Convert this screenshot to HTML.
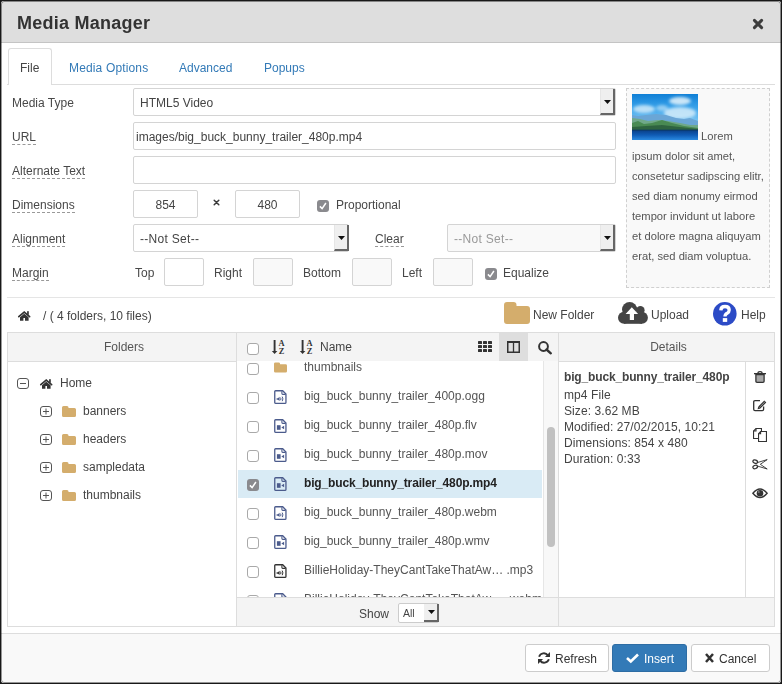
<!DOCTYPE html>
<html><head><meta charset="utf-8">
<style>
*{box-sizing:border-box;margin:0;padding:0}
html,body{width:782px;height:684px;overflow:hidden;background:#181818;font-family:"Liberation Sans",sans-serif;font-size:12px;color:#555;position:relative}
.a{position:absolute}
.t{position:absolute;white-space:nowrap;will-change:transform}
.lbl{border-bottom:1px dashed #999}
svg{position:absolute;display:block;overflow:visible}
</style></head><body>
<div class="a" style="left:1px;top:1px;width:780px;height:682px;background:#fff;border-radius:3px"></div>
<div class="a" style="left:1px;top:1px;width:780px;height:41px;background:#dedede;border-radius:3px 3px 0 0"></div>
<div class="a" style="left:1px;top:42px;width:780px;height:1px;background:#c4c4c4"></div>
<div class="t" style="left:17px;top:14px;font-size:18px;line-height:18px;color:#333;font-weight:bold;letter-spacing:0.25px">Media Manager</div>
<svg style="left:752px;top:18px;" width="12" height="12" viewBox="0 0 12 12"><path d="M2.4 2.4L9.6 9.6M9.6 2.4L2.4 9.6" stroke="#3c3c3c" stroke-width="3" stroke-linecap="round"/></svg>
<div class="a" style="left:7px;top:84px;width:768px;height:1px;background:#ddd"></div>
<div class="a" style="left:8px;top:48px;width:44px;height:37px;background:#fff;border:1px solid #ddd;border-bottom:none;border-radius:3px 3px 0 0"></div>
<div class="t" style="left:20px;top:62px;font-size:12px;line-height:12px;color:#444;">File</div>
<div class="t" style="left:69px;top:62px;font-size:12px;line-height:12px;color:#337ab7;letter-spacing:0.15px">Media Options</div>
<div class="t" style="left:179px;top:62px;font-size:12px;line-height:12px;color:#337ab7;">Advanced</div>
<div class="t" style="left:264px;top:62px;font-size:12px;line-height:12px;color:#337ab7;">Popups</div>
<div class="t" style="left:12px;top:97px;font-size:12px;line-height:12px;color:#484848;">Media Type</div>
<div class="t" style="left:12px;top:131px;font-size:12px;line-height:12px;color:#484848;"><span class="lbl">URL</span></div>
<div class="t" style="left:12px;top:165px;font-size:12px;line-height:12px;color:#484848;"><span class="lbl">Alternate Text</span></div>
<div class="t" style="left:12px;top:199px;font-size:12px;line-height:12px;color:#484848;"><span class="lbl">Dimensions</span></div>
<div class="t" style="left:12px;top:233px;font-size:12px;line-height:12px;color:#484848;"><span class="lbl">Alignment</span></div>
<div class="t" style="left:12px;top:267px;font-size:12px;line-height:12px;color:#484848;"><span class="lbl">Margin</span></div>
<div class="a" style="left:133px;top:88px;width:483px;height:28px;border:1px solid #d4d4d4;border-radius:2px;background:#fff"></div>
<div class="t" style="left:140px;top:97px;font-size:12px;line-height:12px;color:#444;">HTML5 Video</div>
<div class="a" style="left:600px;top:89px;width:15px;height:26px;background:#efefef;border-right:2px solid #666;border-bottom:2px solid #666;border-left:1px solid #e6e6e6"></div>
<svg style="left:604px;top:100px;" width="7" height="4" viewBox="0 0 7 4"><path d="M0 0H7L3.5 4Z" fill="#111"/></svg>
<div class="a" style="left:133px;top:122px;width:483px;height:28px;border:1px solid #d4d4d4;border-radius:2px;background:#fff"></div>
<div class="t" style="left:136px;top:131px;font-size:12px;line-height:12px;color:#444;">images/big_buck_bunny_trailer_480p.mp4</div>
<div class="a" style="left:133px;top:156px;width:483px;height:28px;border:1px solid #d4d4d4;border-radius:2px;background:#fff"></div>
<div class="a" style="left:133px;top:190px;width:65px;height:28px;border:1px solid #d4d4d4;border-radius:2px;background:#fff"></div>
<div class="t" style="left:133px;top:199px;font-size:12px;line-height:12px;color:#444;width:65px;text-align:center;">854</div>
<svg style="left:213px;top:199px;" width="7" height="7" viewBox="0 0 7 7"><path d="M1.2 1.2L5.8 5.8M5.8 1.2L1.2 5.8" stroke="#3a3a3a" stroke-width="1.5" stroke-linecap="round"/></svg>
<div class="a" style="left:235px;top:190px;width:65px;height:28px;border:1px solid #d4d4d4;border-radius:2px;background:#fff"></div>
<div class="t" style="left:235px;top:199px;font-size:12px;line-height:12px;color:#444;width:65px;text-align:center;">480</div>
<div class="a" style="left:317px;top:200px;width:12px;height:12px;background:#8a8a8e;border-radius:3px"></div>
<svg style="left:317px;top:200px;" width="12" height="12" viewBox="0 0 12 12"><path d="M2.9 6.4L5.1 8.6L8.9 3" stroke="#fff" stroke-width="1.5" fill="none"/></svg>
<div class="t" style="left:336px;top:199px;font-size:12px;line-height:12px;color:#484848;">Proportional</div>
<div class="a" style="left:133px;top:224px;width:216px;height:28px;border:1px solid #d4d4d4;border-radius:2px;background:#fff"></div>
<div class="t" style="left:140px;top:233px;font-size:12px;line-height:12px;color:#444;letter-spacing:0.3px">--Not Set--</div>
<div class="a" style="left:334px;top:225px;width:15px;height:26px;background:#efefef;border-right:2px solid #666;border-bottom:2px solid #666;border-left:1px solid #e6e6e6"></div>
<svg style="left:338px;top:236px;" width="7" height="4" viewBox="0 0 7 4"><path d="M0 0H7L3.5 4Z" fill="#111"/></svg>
<div class="t" style="left:375px;top:233px;font-size:12px;line-height:12px;color:#484848;"><span class="lbl">Clear</span></div>
<div class="a" style="left:447px;top:224px;width:169px;height:28px;border:1px solid #d4d4d4;border-radius:2px;background:#f9f9f9"></div>
<div class="t" style="left:454px;top:233px;font-size:12px;line-height:12px;color:#999;letter-spacing:0.3px">--Not Set--</div>
<div class="a" style="left:600px;top:225px;width:15px;height:26px;background:#efefef;border-right:2px solid #666;border-bottom:2px solid #666;border-left:1px solid #e6e6e6"></div>
<svg style="left:604px;top:236px;" width="7" height="4" viewBox="0 0 7 4"><path d="M0 0H7L3.5 4Z" fill="#111"/></svg>
<div class="t" style="left:135px;top:267px;font-size:12px;line-height:12px;color:#484848;">Top</div>
<div class="a" style="left:164px;top:258px;width:40px;height:28px;border:1px solid #d4d4d4;border-radius:2px;background:#fff"></div>
<div class="t" style="left:214px;top:267px;font-size:12px;line-height:12px;color:#484848;">Right</div>
<div class="a" style="left:253px;top:258px;width:40px;height:28px;border:1px solid #d4d4d4;border-radius:2px;background:#f9f9f9"></div>
<div class="t" style="left:303px;top:267px;font-size:12px;line-height:12px;color:#484848;">Bottom</div>
<div class="a" style="left:352px;top:258px;width:40px;height:28px;border:1px solid #d4d4d4;border-radius:2px;background:#f9f9f9"></div>
<div class="t" style="left:402px;top:267px;font-size:12px;line-height:12px;color:#484848;">Left</div>
<div class="a" style="left:433px;top:258px;width:40px;height:28px;border:1px solid #d4d4d4;border-radius:2px;background:#f9f9f9"></div>
<div class="a" style="left:485px;top:268px;width:12px;height:12px;background:#8a8a8e;border-radius:3px"></div>
<svg style="left:485px;top:268px;" width="12" height="12" viewBox="0 0 12 12"><path d="M2.9 6.4L5.1 8.6L8.9 3" stroke="#fff" stroke-width="1.5" fill="none"/></svg>
<div class="t" style="left:503px;top:267px;font-size:12px;line-height:12px;color:#484848;">Equalize</div>
<div class="a" style="left:626px;top:88px;width:144px;height:200px;border:1px dashed #d0d0d0;background:#f9f9f9"></div>
<svg style="left:632px;top:94px" width="66" height="46" viewBox="0 0 66 46">
<defs><linearGradient id="sky" x1="0" y1="0" x2="0" y2="1"><stop offset="0" stop-color="#0f7fd6"/><stop offset="0.3" stop-color="#3aa3ea"/><stop offset="0.6" stop-color="#7cc6f3"/><stop offset="1" stop-color="#a6daf6"/></linearGradient>
<linearGradient id="sea" x1="0" y1="0" x2="0" y2="1"><stop offset="0" stop-color="#0a3f86"/><stop offset="0.5" stop-color="#0f5bb5"/><stop offset="1" stop-color="#2a8ae0"/></linearGradient>
<filter id="bl" x="-20%" y="-20%" width="140%" height="140%"><feGaussianBlur stdDeviation="1.6"/></filter>
<filter id="bl2"><feGaussianBlur stdDeviation="0.5"/></filter>
<clipPath id="cp"><rect width="66" height="46"/></clipPath></defs>
<g clip-path="url(#cp)">
<rect width="66" height="46" fill="url(#sky)"/>
<g filter="url(#bl)"><ellipse cx="48" cy="7" rx="11" ry="4" fill="#e6f4fc" opacity=".85"/><ellipse cx="12" cy="15" rx="11" ry="4" fill="#d8eefa" opacity=".8"/><ellipse cx="48" cy="19" rx="16" ry="6" fill="#d5edfa" opacity=".85"/><ellipse cx="30" cy="14" rx="6" ry="3" fill="#cfe9f8" opacity=".6"/></g>
<g filter="url(#bl2)">
<path d="M0 21L6 22L14 21L24 20L34 21L44 24L52 25L58 24L66 27V46H0Z" fill="#6aa6d6"/>
<path d="M0 24L8 25L16 27L26 26L36 27L48 29L58 31L66 31V46H0Z" fill="#6fa88a"/>
<path d="M0 29L6 27L12 30L20 29L30 26L40 29L52 32L66 34V46H0Z" fill="#4a8a52"/>
<path d="M0 33L14 32L30 31L48 33L66 35V46H0Z" fill="#2f6440"/>
</g>
<rect y="36" width="66" height="10" fill="url(#sea)"/>
<rect y="35.5" width="66" height="1.5" fill="#0b3a6a" opacity=".7"/>
</g>
</svg>
<div class="t" style="left:701px;top:131px;font-size:11.2px;line-height:11.2px;color:#555;">Lorem</div>
<div class="t" style="left:632px;top:151px;font-size:11.2px;line-height:11.2px;color:#555;">ipsum dolor sit amet,</div>
<div class="t" style="left:632px;top:171px;font-size:11.2px;line-height:11.2px;color:#555;">consetetur sadipscing elitr,</div>
<div class="t" style="left:632px;top:191px;font-size:11.2px;line-height:11.2px;color:#555;">sed diam nonumy eirmod</div>
<div class="t" style="left:632px;top:211px;font-size:11.2px;line-height:11.2px;color:#555;">tempor invidunt ut labore</div>
<div class="t" style="left:632px;top:231px;font-size:11.2px;line-height:11.2px;color:#555;">et dolore magna aliquyam</div>
<div class="t" style="left:632px;top:251px;font-size:11.2px;line-height:11.2px;color:#555;">erat, sed diam voluptua.</div>
<div class="a" style="left:7px;top:297px;width:768px;height:1px;background:#e5e5e5"></div>
<svg style="left:18px;top:311px;" width="12" height="10" viewBox="0 0 12 10"><path d="M0.8 5.6L6.2 1L11.6 5.6" stroke="#333" stroke-width="1.7" fill="none" stroke-linecap="round"/><rect x="9.1" y="0.2" width="1.7" height="3.6" fill="#333"/><path d="M2 6.2L6.2 2.7L10.6 6.3V9.8H7V7H5.4V9.8H2Z" fill="#333"/></svg>
<div class="t" style="left:43px;top:310px;font-size:12px;line-height:12px;color:#444;">/ ( 4 folders, 10 files)</div>
<svg style="left:504px;top:302px;" width="26" height="22" viewBox="0 0 26 22"><path d="M3 0H9.5Q12.5 0 12.5 3V4H23Q26 4 26 7V19Q26 22 23 22H3Q0 22 0 19V3Q0 0 3 0Z" fill="#d4ad6c"/></svg>
<div class="t" style="left:533px;top:309px;font-size:12px;line-height:12px;color:#444;">New Folder</div>
<svg style="left:618px;top:302px;" width="30" height="22" viewBox="0 0 30 22"><g fill="#444"><circle cx="11.6" cy="7.6" r="7.6"/><circle cx="22.4" cy="8.3" r="4.2"/><circle cx="6" cy="15.8" r="6"/><circle cx="23.9" cy="15.8" r="6"/><rect x="6" y="10" width="18" height="11.8"/></g><path d="M13.8 5.2L20.1 12H16V18.1H11.8V12H7.6Z" fill="#fff"/></svg>
<div class="t" style="left:651px;top:309px;font-size:12px;line-height:12px;color:#444;">Upload</div>
<svg style="left:713px;top:302px;" width="24" height="24" viewBox="0 0 24 24"><circle cx="11.8" cy="11.8" r="11.8" fill="#2c4bc6"/><path d="M7.8 8.4Q8 4.5 12 4.5Q16.2 4.5 16.2 8.1Q16.2 10.2 14.2 11.2Q12 12.2 12 14.6" stroke="#fff" stroke-width="3.3" fill="none"/><rect x="9.8" y="16.1" width="4.4" height="3.8" fill="#fff"/></svg>
<div class="t" style="left:741px;top:309px;font-size:12px;line-height:12px;color:#444;">Help</div>
<div class="a" style="left:7px;top:332px;width:768px;height:295px;border:1px solid #ddd;border-bottom:none"></div>
<div class="a" style="left:7px;top:626px;width:768px;height:1px;background:#ddd"></div>
<div class="a" style="left:8px;top:333px;width:228px;height:28px;background:#f4f4f4"></div>
<div class="a" style="left:8px;top:361px;width:228px;height:1px;background:#ddd"></div>
<div class="t" style="left:10px;top:341px;font-size:12px;line-height:12px;color:#555;width:228px;text-align:center;">Folders</div>
<div class="a" style="left:236px;top:333px;width:1px;height:293px;background:#ddd"></div>
<svg style="left:17px;top:378px;" width="12" height="11" viewBox="0 0 12 11"><rect x="0.5" y="0.5" width="11" height="10" rx="2.5" fill="none" stroke="#555"/><path d="M3 5.5H9" stroke="#555"/></svg>
<svg style="left:40px;top:379px;" width="12" height="10" viewBox="0 0 12 10"><path d="M0.8 5.6L6.2 1L11.6 5.6" stroke="#333" stroke-width="1.7" fill="none" stroke-linecap="round"/><rect x="9.1" y="0.2" width="1.7" height="3.6" fill="#333"/><path d="M2 6.2L6.2 2.7L10.6 6.3V9.8H7V7H5.4V9.8H2Z" fill="#333"/></svg>
<div class="t" style="left:60px;top:377px;font-size:12px;line-height:12px;color:#444;">Home</div>
<svg style="left:40px;top:406px;" width="12" height="11" viewBox="0 0 12 11"><rect x="0.5" y="0.5" width="11" height="10" rx="2.5" fill="none" stroke="#555"/><path d="M3 5.5H9M6 2.5V8.5" stroke="#555"/></svg>
<svg style="left:62px;top:406px;" width="14" height="11" viewBox="0 0 14 11"><path d="M1.5 0H5Q6.5 0 6.5 1.5V2H12.5Q14 2 14 3.5V9.5Q14 11 12.5 11H1.5Q0 11 0 9.5V1.5Q0 0 1.5 0Z" fill="#d4ad6c"/></svg>
<div class="t" style="left:83px;top:405px;font-size:12px;line-height:12px;color:#444;">banners</div>
<svg style="left:40px;top:434px;" width="12" height="11" viewBox="0 0 12 11"><rect x="0.5" y="0.5" width="11" height="10" rx="2.5" fill="none" stroke="#555"/><path d="M3 5.5H9M6 2.5V8.5" stroke="#555"/></svg>
<svg style="left:62px;top:434px;" width="14" height="11" viewBox="0 0 14 11"><path d="M1.5 0H5Q6.5 0 6.5 1.5V2H12.5Q14 2 14 3.5V9.5Q14 11 12.5 11H1.5Q0 11 0 9.5V1.5Q0 0 1.5 0Z" fill="#d4ad6c"/></svg>
<div class="t" style="left:83px;top:433px;font-size:12px;line-height:12px;color:#444;">headers</div>
<svg style="left:40px;top:462px;" width="12" height="11" viewBox="0 0 12 11"><rect x="0.5" y="0.5" width="11" height="10" rx="2.5" fill="none" stroke="#555"/><path d="M3 5.5H9M6 2.5V8.5" stroke="#555"/></svg>
<svg style="left:62px;top:462px;" width="14" height="11" viewBox="0 0 14 11"><path d="M1.5 0H5Q6.5 0 6.5 1.5V2H12.5Q14 2 14 3.5V9.5Q14 11 12.5 11H1.5Q0 11 0 9.5V1.5Q0 0 1.5 0Z" fill="#d4ad6c"/></svg>
<div class="t" style="left:83px;top:461px;font-size:12px;line-height:12px;color:#444;">sampledata</div>
<svg style="left:40px;top:490px;" width="12" height="11" viewBox="0 0 12 11"><rect x="0.5" y="0.5" width="11" height="10" rx="2.5" fill="none" stroke="#555"/><path d="M3 5.5H9M6 2.5V8.5" stroke="#555"/></svg>
<svg style="left:62px;top:490px;" width="14" height="11" viewBox="0 0 14 11"><path d="M1.5 0H5Q6.5 0 6.5 1.5V2H12.5Q14 2 14 3.5V9.5Q14 11 12.5 11H1.5Q0 11 0 9.5V1.5Q0 0 1.5 0Z" fill="#d4ad6c"/></svg>
<div class="t" style="left:83px;top:489px;font-size:12px;line-height:12px;color:#444;">thumbnails</div>
<div class="a" style="left:237px;top:333px;width:321px;height:28px;background:#f4f4f4"></div>
<div class="a" style="left:499px;top:333px;width:29px;height:28px;background:#dedede"></div>
<div class="a" style="left:558px;top:333px;width:1px;height:293px;background:#ddd"></div>
<div class="a" style="left:237px;top:361px;width:321px;height:236px;overflow:hidden">
<div class="a" style="left:10px;top:2px;width:12px;height:12px;background:#fff;border:1px solid #a9a9a9;border-radius:3px"></div>
<svg style="left:37px;top:1px;" width="13" height="11" viewBox="0 0 14 11"><path d="M1.5 0H5Q6.5 0 6.5 1.5V2H12.5Q14 2 14 3.5V9.5Q14 11 12.5 11H1.5Q0 11 0 9.5V1.5Q0 0 1.5 0Z" fill="#d4ad6c"/></svg>
<div class="t" style="left:67px;top:0px;font-size:12px;line-height:12px;color:#555;">thumbnails</div>
<div class="a" style="left:10px;top:31px;width:12px;height:12px;background:#fff;border:1px solid #a9a9a9;border-radius:3px"></div>
<svg style="left:37px;top:29px;" width="13" height="14" viewBox="0 0 13 14"><path d="M1.6 0.75H8.7L11.95 4V12.4Q11.95 13.35 11 13.35H1.6Q0.75 13.35 0.75 12.4V1.6Q0.75 0.75 1.6 0.75Z" fill="none" stroke="#4b5b8c" stroke-width="1.3"/><path d="M7.9 1.2V3.6Q7.9 4.4 8.7 4.4H11.6" fill="none" stroke="#4b5b8c" stroke-width="1.1"/><path d="M2.6 8.2H3.9L5.6 6.7V11.1L3.9 9.7H2.6Z" fill="#4b5b8c"/><path d="M6.6 7.6Q7.3 8.9 6.6 10.2M8.2 6.6Q9.6 8.9 8.2 11.2" stroke="#4b5b8c" stroke-width="1" fill="none"/></svg>
<div class="t" style="left:67px;top:29px;font-size:12px;line-height:12px;color:#555;">big_buck_bunny_trailer_400p.ogg</div>
<div class="a" style="left:10px;top:60px;width:12px;height:12px;background:#fff;border:1px solid #a9a9a9;border-radius:3px"></div>
<svg style="left:37px;top:58px;" width="13" height="14" viewBox="0 0 13 14"><path d="M1.6 0.75H8.7L11.95 4V12.4Q11.95 13.35 11 13.35H1.6Q0.75 13.35 0.75 12.4V1.6Q0.75 0.75 1.6 0.75Z" fill="none" stroke="#4b5b8c" stroke-width="1.3"/><path d="M7.9 1.2V3.6Q7.9 4.4 8.7 4.4H11.6" fill="none" stroke="#4b5b8c" stroke-width="1.1"/><rect x="2.9" y="6.2" width="3.7" height="4.6" fill="#4b5b8c"/><path d="M7.3 8.5L10.1 6.7V10.3Z" fill="#4b5b8c"/></svg>
<div class="t" style="left:67px;top:58px;font-size:12px;line-height:12px;color:#555;">big_buck_bunny_trailer_480p.flv</div>
<div class="a" style="left:10px;top:89px;width:12px;height:12px;background:#fff;border:1px solid #a9a9a9;border-radius:3px"></div>
<svg style="left:37px;top:87px;" width="13" height="14" viewBox="0 0 13 14"><path d="M1.6 0.75H8.7L11.95 4V12.4Q11.95 13.35 11 13.35H1.6Q0.75 13.35 0.75 12.4V1.6Q0.75 0.75 1.6 0.75Z" fill="none" stroke="#4b5b8c" stroke-width="1.3"/><path d="M7.9 1.2V3.6Q7.9 4.4 8.7 4.4H11.6" fill="none" stroke="#4b5b8c" stroke-width="1.1"/><rect x="2.9" y="6.2" width="3.7" height="4.6" fill="#4b5b8c"/><path d="M7.3 8.5L10.1 6.7V10.3Z" fill="#4b5b8c"/></svg>
<div class="t" style="left:67px;top:87px;font-size:12px;line-height:12px;color:#555;">big_buck_bunny_trailer_480p.mov</div>
<div class="a" style="left:1px;top:109px;width:304px;height:28px;background:#d9ebf5"></div>
<div class="a" style="left:10px;top:118px;width:12px;height:12px;background:#8a8a8e;border-radius:3px"></div>
<svg style="left:10px;top:118px;" width="12" height="12" viewBox="0 0 12 12"><path d="M2.9 6.4L5.1 8.6L8.9 3" stroke="#fff" stroke-width="1.5" fill="none"/></svg>
<svg style="left:37px;top:116px;" width="13" height="14" viewBox="0 0 13 14"><path d="M1.6 0.75H8.7L11.95 4V12.4Q11.95 13.35 11 13.35H1.6Q0.75 13.35 0.75 12.4V1.6Q0.75 0.75 1.6 0.75Z" fill="none" stroke="#4b5b8c" stroke-width="1.3"/><path d="M7.9 1.2V3.6Q7.9 4.4 8.7 4.4H11.6" fill="none" stroke="#4b5b8c" stroke-width="1.1"/><rect x="2.9" y="6.2" width="3.7" height="4.6" fill="#4b5b8c"/><path d="M7.3 8.5L10.1 6.7V10.3Z" fill="#4b5b8c"/></svg>
<div class="t" style="left:67px;top:116px;font-size:12px;line-height:12px;color:#222;font-weight:bold;letter-spacing:-0.15px">big_buck_bunny_trailer_480p.mp4</div>
<div class="a" style="left:10px;top:147px;width:12px;height:12px;background:#fff;border:1px solid #a9a9a9;border-radius:3px"></div>
<svg style="left:37px;top:145px;" width="13" height="14" viewBox="0 0 13 14"><path d="M1.6 0.75H8.7L11.95 4V12.4Q11.95 13.35 11 13.35H1.6Q0.75 13.35 0.75 12.4V1.6Q0.75 0.75 1.6 0.75Z" fill="none" stroke="#4b5b8c" stroke-width="1.3"/><path d="M7.9 1.2V3.6Q7.9 4.4 8.7 4.4H11.6" fill="none" stroke="#4b5b8c" stroke-width="1.1"/><path d="M2.6 8.2H3.9L5.6 6.7V11.1L3.9 9.7H2.6Z" fill="#4b5b8c"/><path d="M6.6 7.6Q7.3 8.9 6.6 10.2M8.2 6.6Q9.6 8.9 8.2 11.2" stroke="#4b5b8c" stroke-width="1" fill="none"/></svg>
<div class="t" style="left:67px;top:145px;font-size:12px;line-height:12px;color:#555;">big_buck_bunny_trailer_480p.webm</div>
<div class="a" style="left:10px;top:176px;width:12px;height:12px;background:#fff;border:1px solid #a9a9a9;border-radius:3px"></div>
<svg style="left:37px;top:174px;" width="13" height="14" viewBox="0 0 13 14"><path d="M1.6 0.75H8.7L11.95 4V12.4Q11.95 13.35 11 13.35H1.6Q0.75 13.35 0.75 12.4V1.6Q0.75 0.75 1.6 0.75Z" fill="none" stroke="#4b5b8c" stroke-width="1.3"/><path d="M7.9 1.2V3.6Q7.9 4.4 8.7 4.4H11.6" fill="none" stroke="#4b5b8c" stroke-width="1.1"/><rect x="2.9" y="6.2" width="3.7" height="4.6" fill="#4b5b8c"/><path d="M7.3 8.5L10.1 6.7V10.3Z" fill="#4b5b8c"/></svg>
<div class="t" style="left:67px;top:174px;font-size:12px;line-height:12px;color:#555;">big_buck_bunny_trailer_480p.wmv</div>
<div class="a" style="left:10px;top:205px;width:12px;height:12px;background:#fff;border:1px solid #a9a9a9;border-radius:3px"></div>
<svg style="left:37px;top:203px;" width="13" height="14" viewBox="0 0 13 14"><path d="M1.6 0.75H8.7L11.95 4V12.4Q11.95 13.35 11 13.35H1.6Q0.75 13.35 0.75 12.4V1.6Q0.75 0.75 1.6 0.75Z" fill="none" stroke="#333" stroke-width="1.3"/><path d="M7.9 1.2V3.6Q7.9 4.4 8.7 4.4H11.6" fill="none" stroke="#333" stroke-width="1.1"/><path d="M2.6 8.2H3.9L5.6 6.7V11.1L3.9 9.7H2.6Z" fill="#333"/><path d="M6.6 7.6Q7.3 8.9 6.6 10.2M8.2 6.6Q9.6 8.9 8.2 11.2" stroke="#333" stroke-width="1" fill="none"/></svg>
<div class="t" style="left:67px;top:203px;font-size:12px;line-height:12px;color:#555;">BillieHoliday-TheyCantTakeThatAw… .mp3</div>
<div class="a" style="left:10px;top:234px;width:12px;height:12px;background:#fff;border:1px solid #a9a9a9;border-radius:3px"></div>
<svg style="left:37px;top:232px;" width="13" height="14" viewBox="0 0 13 14"><path d="M1.6 0.75H8.7L11.95 4V12.4Q11.95 13.35 11 13.35H1.6Q0.75 13.35 0.75 12.4V1.6Q0.75 0.75 1.6 0.75Z" fill="none" stroke="#4b5b8c" stroke-width="1.3"/><path d="M7.9 1.2V3.6Q7.9 4.4 8.7 4.4H11.6" fill="none" stroke="#4b5b8c" stroke-width="1.1"/><path d="M2.6 8.2H3.9L5.6 6.7V11.1L3.9 9.7H2.6Z" fill="#4b5b8c"/><path d="M6.6 7.6Q7.3 8.9 6.6 10.2M8.2 6.6Q9.6 8.9 8.2 11.2" stroke="#4b5b8c" stroke-width="1" fill="none"/></svg>
<div class="t" style="left:67px;top:232px;font-size:12px;line-height:12px;color:#555;">BillieHoliday-TheyCantTakeThatAw… .webm</div>
</div>
<div class="a" style="left:247px;top:343px;width:12px;height:12px;background:#fff;border:1px solid #a9a9a9;border-radius:3px"></div>
<svg style="left:271px;top:340px;" width="14" height="15" viewBox="0 0 14 15"><path d="M3.6 0V11.5" stroke="#333" stroke-width="1.9"/><path d="M0.8 11H6.4L3.6 14Z" fill="#333"/><text x="10.5" y="6" text-anchor="middle" font-size="8.4" font-weight="bold" font-family="Liberation Serif" fill="#333">A</text><text x="10.5" y="13.9" text-anchor="middle" font-size="8.4" font-weight="bold" font-family="Liberation Serif" fill="#333">Z</text></svg>
<svg style="left:299px;top:340px;" width="14" height="15" viewBox="0 0 14 15"><path d="M3.6 0V11.5" stroke="#333" stroke-width="1.9"/><path d="M0.8 11H6.4L3.6 14Z" fill="#333"/><text x="10.5" y="6" text-anchor="middle" font-size="8.4" font-weight="bold" font-family="Liberation Serif" fill="#333">A</text><text x="10.5" y="13.9" text-anchor="middle" font-size="8.4" font-weight="bold" font-family="Liberation Serif" fill="#333">Z</text></svg>
<div class="t" style="left:320px;top:341px;font-size:12px;line-height:12px;color:#444;">Name</div>
<svg style="left:478px;top:341px;" width="14" height="11" viewBox="0 0 14 11"><g fill="#333"><rect x="0" y="0" width="4" height="3" rx=".6"/><rect x="5" y="0" width="4" height="3" rx=".6"/><rect x="10" y="0" width="4" height="3" rx=".6"/><rect x="0" y="4" width="4" height="3" rx=".6"/><rect x="5" y="4" width="4" height="3" rx=".6"/><rect x="10" y="4" width="4" height="3" rx=".6"/><rect x="0" y="8" width="4" height="3" rx=".6"/><rect x="5" y="8" width="4" height="3" rx=".6"/><rect x="10" y="8" width="4" height="3" rx=".6"/></g></svg>
<svg style="left:507px;top:341px;" width="13" height="12" viewBox="0 0 13 12"><rect x="0.75" y="0.75" width="11.5" height="10.5" fill="none" stroke="#333" stroke-width="1.5"/><rect x="0" y="0" width="13" height="2" fill="#333"/><path d="M6.5 1V11.5" stroke="#333" stroke-width="1.3"/></svg>
<svg style="left:538px;top:341px;" width="14" height="13" viewBox="0 0 14 13"><circle cx="5.5" cy="5.5" r="4.4" fill="none" stroke="#333" stroke-width="2"/><path d="M8.5 8.5L12.8 12.3" stroke="#333" stroke-width="2.4" stroke-linecap="round"/></svg>
<div class="a" style="left:543px;top:361px;width:15px;height:236px;background:#f8f8f8;border-left:1px solid #e6e6e6"></div>
<div class="a" style="left:547px;top:427px;width:8px;height:120px;background:#c1c1c1;border-radius:4px"></div>
<div class="a" style="left:237px;top:597px;width:321px;height:29px;background:#f4f4f4;border-top:1px solid #ddd"></div>
<div class="t" style="left:359px;top:608px;font-size:12px;line-height:12px;color:#444;">Show</div>
<div class="a" style="left:398px;top:603px;width:41px;height:20px;border:1px solid #ccc;background:#fff;border-radius:2px"></div>
<div class="t" style="left:403px;top:608px;font-size:10.5px;line-height:10.5px;color:#444;">All</div>
<div class="a" style="left:424px;top:604px;width:15px;height:18px;background:#efefef;border-right:2px solid #666;border-bottom:2px solid #666"></div>
<svg style="left:428px;top:610px;" width="7" height="4" viewBox="0 0 7 4"><path d="M0 0H7L3.5 4Z" fill="#111"/></svg>
<div class="a" style="left:559px;top:333px;width:215px;height:28px;background:#f4f4f4"></div>
<div class="a" style="left:559px;top:361px;width:215px;height:1px;background:#ddd"></div>
<div class="t" style="left:561px;top:341px;font-size:12px;line-height:12px;color:#555;width:215px;text-align:center;">Details</div>
<div class="a" style="left:774px;top:333px;width:1px;height:293px;background:#ddd"></div>
<div class="a" style="left:745px;top:362px;width:1px;height:264px;background:#ddd"></div>
<div class="a" style="left:559px;top:597px;width:215px;height:29px;background:#f4f4f4;border-top:1px solid #ddd"></div>
<div class="t" style="left:564px;top:371px;font-size:12px;line-height:12px;color:#444;font-weight:bold;letter-spacing:-0.15px">big_buck_bunny_trailer_480p</div>
<div class="t" style="left:564px;top:389px;font-size:12px;line-height:12px;color:#444;letter-spacing:0.08px">mp4 File</div>
<div class="t" style="left:564px;top:405px;font-size:12px;line-height:12px;color:#444;letter-spacing:0.08px">Size: 3.62 MB</div>
<div class="t" style="left:564px;top:421px;font-size:12px;line-height:12px;color:#444;letter-spacing:0.08px">Modified: 27/02/2015, 10:21</div>
<div class="t" style="left:564px;top:437px;font-size:12px;line-height:12px;color:#444;letter-spacing:0.08px">Dimensions: 854 x 480</div>
<div class="t" style="left:564px;top:453px;font-size:12px;line-height:12px;color:#444;letter-spacing:0.08px">Duration: 0:33</div>
<svg style="left:754px;top:371px;" width="12" height="12" viewBox="0 0 12 12"><path d="M3.9 2.3Q3.9 0.6 6 0.6Q8.1 0.6 8.1 2.3" stroke="#333" stroke-width="1.2" fill="none"/><rect x="0" y="2" width="12" height="1.3" fill="#333"/><path d="M1.9 3.6H10.1V10.2Q10.1 11.3 9 11.3H3Q1.9 11.3 1.9 10.2Z" fill="#a8a8a8" stroke="#333" stroke-width="1.3"/></svg>
<svg style="left:753px;top:400px;" width="14" height="11" viewBox="0 0 14 11"><path d="M7 0.7H2Q0.7 0.7 0.7 2V9.3Q0.7 10.6 2 10.6H9.3Q10.6 10.6 10.6 9.3V6.5" stroke="#333" stroke-width="1.3" fill="none"/><path d="M6.3 7.5L12.3 1.5" stroke="#333" stroke-width="2.8"/><path d="M4.6 9.3L5.2 6.6L7.3 8.7Z" fill="#333"/><path d="M7.2 6.6L11.8 2" stroke="#fff" stroke-width="0.5"/></svg>
<svg style="left:753px;top:428px;" width="15" height="14" viewBox="0 0 15 14"><path d="M3 0.55H8.45V10.45H0.55V3Z" fill="#fff" stroke="#333" stroke-width="1.1"/><path d="M0.55 3H3V0.55" fill="none" stroke="#333" stroke-width="1.1"/><path d="M7.6 3.55H13.45V13.45H5.55V5.8Z" fill="#fff" stroke="#333" stroke-width="1.1"/><path d="M5.55 5.8H7.6V3.55" fill="none" stroke="#333" stroke-width="1.1"/></svg>
<svg style="left:752px;top:459px;" width="16" height="11" viewBox="0 0 16 11"><ellipse cx="3.2" cy="2.6" rx="2.4" ry="1.6" transform="rotate(22 3.2 2.6)" fill="none" stroke="#333" stroke-width="1.2"/><ellipse cx="3.2" cy="8" rx="2.4" ry="1.6" transform="rotate(-22 3.2 8)" fill="none" stroke="#333" stroke-width="1.2"/><path d="M5.3 3.6L15.2 0.6L8.3 5.3L15.2 10L5.3 7" fill="none" stroke="#333" stroke-width="0.9"/></svg>
<svg style="left:752px;top:488px;" width="16" height="11" viewBox="0 0 16 11"><path d="M0.9 5.3Q8 -3.2 15.1 5.3Q8 13.8 0.9 5.3Z" fill="#fff" stroke="#333" stroke-width="1.4"/><circle cx="8" cy="5.3" r="3.3" fill="#333"/><circle cx="6.8" cy="4.1" r="1" fill="#777"/></svg>
<div class="a" style="left:1px;top:633px;width:780px;height:1px;background:#ddd"></div>
<div class="a" style="left:1px;top:634px;width:780px;height:49px;background:#f9f9f9;border-radius:0 0 3px 3px"></div>
<div class="a" style="left:525px;top:644px;width:84px;height:28px;background:#fff;border:1px solid #ccc;border-radius:3px"></div>
<svg style="left:538px;top:652px;" width="12" height="12" viewBox="0 0 12 12"><path d="M1.1 4.7A5 5 0 0 1 9.9 3.4" stroke="#333" stroke-width="1.9" fill="none"/><path d="M12 0V5.1H6.9Z" fill="#333"/><path d="M10.9 7.3A5 5 0 0 1 2.1 8.6" stroke="#333" stroke-width="1.9" fill="none"/><path d="M0 12V6.9H5.1Z" fill="#333"/></svg>
<div class="t" style="left:555px;top:653px;font-size:12px;line-height:12px;color:#333;">Refresh</div>
<div class="a" style="left:612px;top:644px;width:75px;height:28px;background:#337ab7;border:1px solid #2e6da4;border-radius:3px"></div>
<svg style="left:626px;top:653px;" width="13" height="10" viewBox="0 0 13 10"><path d="M1 5L4.8 8.5L12 1.5" stroke="#fff" stroke-width="2.6" fill="none"/></svg>
<div class="t" style="left:644px;top:653px;font-size:12px;line-height:12px;color:#fff;">Insert</div>
<div class="a" style="left:691px;top:644px;width:79px;height:28px;background:#fff;border:1px solid #ccc;border-radius:3px"></div>
<svg style="left:705px;top:653px;" width="9" height="10" viewBox="0 0 9 10"><path d="M1 1L8 9M8 1L1 9" stroke="#333" stroke-width="2.5"/></svg>
<div class="t" style="left:719px;top:653px;font-size:12px;line-height:12px;color:#333;">Cancel</div>
<div class="a" style="left:1px;top:1px;width:780px;height:682px;border:1px solid rgba(0,0,0,0.4);border-radius:3px"></div>
</body></html>
